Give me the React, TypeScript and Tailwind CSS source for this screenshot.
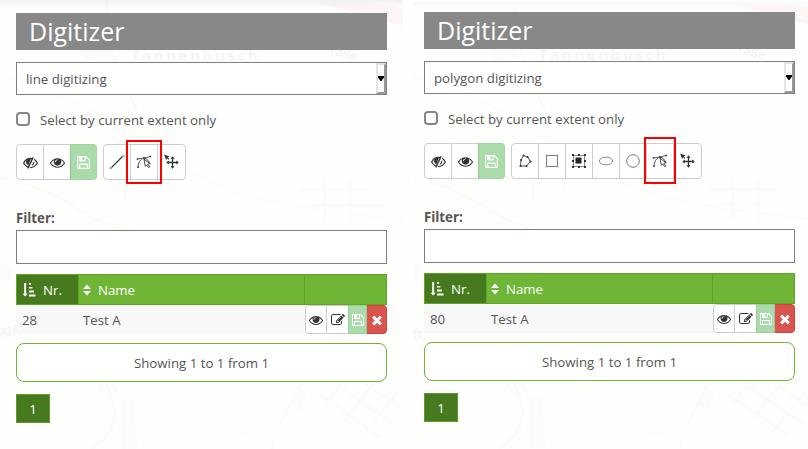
import React from 'react';

type IconProps = { size?: number };

const EYE =
  'M1664 960q-152-236-381-353 61 104 61 225 0 185-131.500 316.500t-316.500 131.500-316.500-131.500-131.500-316.500q0-121 61-225-229 117-381 353 133 205 333.500 326.500t434.500 121.500 434.500-121.500 333.500-326.500zm-720-384q0-20-14-34t-34-14q-125 0-214.500 89.500t-89.500 214.500q0 20 14 34t34 14 34-14 14-34q0-86 61-147t147-61q20 0 34-14t14-34zm848 384q0 34-20 69-140 230-376.500 368.500t-499.500 138.500-499.500-139-376.500-368q-20-35-20-69t20-69q140-229 376.500-368t499.500-139 499.500 139 376.500 368q20 35 20 69z';
const SAVE =
  'M512 1536h768v-384h-768v384zm896 0h128v-896q0-14-10-38.500t-20-34.500l-281-281q-10-10-34-20t-39-10v416q0 40-28 68t-68 28h-576q-40 0-68-28t-28-68v-416h-128v1280h128v-416q0-40 28-68t68-28h832q40 0 68 28t28 68v416zm-384-928v-320q0-13-9.500-22.500t-22.500-9.500h-192q-13 0-22.500 9.500t-9.500 22.500v320q0 13 9.500 22.500t22.500 9.500h192q13 0 22.500-9.500t9.500-22.500zm640 32v928q0 40-28 68t-68 28h-1344q-40 0-68-28t-28-68v-1344q0-40 28-68t68-28h928q40 0 88 20t76 48l280 280q28 28 48 76t20 88z';
const EDIT =
  'M888 1184l116-116-152-152-116 116v56h96v96h56zm440-720q-16-16-33 1l-350 350q-17 17-1 33t33-1l350-350q17-17 1-33zm80 594v190q0 119-84.500 203.500t-203.500 84.500h-832q-119 0-203.500-84.500t-84.500-203.500v-832q0-119 84.500-203.500t203.500-84.500h832q63 0 117 25 15 7 18 23 3 17-9 29l-49 49q-14 14-32 8-23-6-45-6h-832q-66 0-113 47t-47 113v832q0 66 47 113t113 47h832q66 0 113-47t47-113v-126q0-13 9-22l64-64q15-15 35-7t20 29zm-96-738l288 288-672 672h-288v-288zm444 132l-92 92-288-288 92-92q28-28 68-28t68 28l152 152q28 28 28 68t-28 68z';
const TIMES =
  'M1490 1322q0 40-28 68l-136 136q-28 28-68 28t-68-28l-294-294-294 294q-28 28-68 28t-68-28l-136-136q-28-28-28-68t28-68l294-294-294-294q-28-28-28-68t28-68l136-136q28-28 68-28t68 28l294 294 294-294q28-28 68-28t68 28l136 136q28 28 28 68t-28 68l-294 294 294 294q28 28 28 68z';

function Glyph({ d, size = 14 }: { d: string; size?: number }) {
  return (
    <svg width={size} height={size} viewBox="0 0 1792 1792" fill="currentColor" className="shrink-0">
      <path d={d} />
    </svg>
  );
}

const EyeIcon = ({ size }: IconProps) => <Glyph d={EYE} size={size} />;
const SaveIcon = ({ size }: IconProps) => <Glyph d={SAVE} size={size} />;

function EyeSlashIcon() {
  return (
    <svg width="15" height="15" viewBox="0 0 14 14" className="shrink-0">
      <path
        d="M7 3.1C4.300 3.100 2 4.700.6 7.500 2 10 4.300 11.700 7 11.700S12 10 13.400 7.500C12 4.700 9.700 3.100 7 3.100z"
        fill="none"
        stroke="currentColor"
        strokeWidth="1.1"
      />
      <path d="M7.500 3.300a3.300 3.300 0 0 0-2.500 6.200z" fill="currentColor" />
      <path d="M10.200 3 5.700 12" stroke="#fff" strokeWidth="1.600" />
      <path d="M9.400 2.200 4.500 12.500" stroke="currentColor" strokeWidth="1.300" />
      <path d="M10.300 6.300q0 2.200-2 3.400" fill="none" stroke="currentColor" strokeWidth="1" />
    </svg>
  );
}

function LineIcon() {
  return (
    <svg width="16" height="16" viewBox="0 0 16 16" fill="none" className="shrink-0">
      <path d="M2.500 13.500 13.500 2.500" stroke="#333" strokeWidth="1.100" />
      <rect x=".8" y="13" width="2" height="2" rx="1" fill="#fff" stroke="#888" strokeWidth=".8" />
      <rect x="13.200" y="1" width="2" height="2" rx="1" fill="#fff" stroke="#888" strokeWidth=".8" />
    </svg>
  );
}

function PolygonIcon() {
  return (
    <svg width="16" height="16" viewBox="0 0 16 16" fill="none" className="shrink-0">
      <path d="M6.500 2.500 10.500 4 13.500 8.500 9.500 13H3.500L4 7z" stroke="#555" strokeWidth="1" />
      <g fill="#333">
        <circle cx="6.500" cy="2.500" r="1" />
        <circle cx="10.500" cy="4" r="1.100" />
        <circle cx="13.500" cy="8.500" r="1.100" />
        <circle cx="9.500" cy="13" r="1" />
        <circle cx="3.500" cy="13" r="1.100" />
        <circle cx="4" cy="7" r="1" />
      </g>
    </svg>
  );
}

function RectangleIcon() {
  return (
    <svg width="16" height="16" viewBox="0 0 16 16" fill="none" className="shrink-0">
      <path d="M2.500 2.500h11v11h-11z" stroke="#777" />
      <path d="M1.500 1.500h2v2h-2zM12.500 1.500h2v2h-2zM1.500 12.500h2v2h-2zM12.500 12.500h2v2h-2z" fill="#aaa" />
    </svg>
  );
}

function DonutIcon() {
  return (
    <svg width="16" height="16" viewBox="0 0 16 16" fill="none" className="shrink-0">
      <path d="M2.500 2.500h11v11h-11z" stroke="#888" />
      <path
        d="M1 1h2v2H1zM7 1h2v2H7zM13 1h2v2h-2zM1 13h2v2H1zM7 13h2v2H7zM13 13h2v2h-2zM1 7h2v2H1zM13 7h2v2h-2z"
        fill="#333"
      />
      <path d="M4.500 4.500h6v6h-6z" fill="#222" />
    </svg>
  );
}

function EllipseIcon() {
  return (
    <svg width="16" height="16" viewBox="0 0 16 16" fill="none" className="shrink-0">
      <ellipse cx="8" cy="8" rx="6.600" ry="3.900" stroke="#666" strokeWidth=".8" />
    </svg>
  );
}

function CircleIcon() {
  return (
    <svg width="16" height="16" viewBox="0 0 16 16" fill="none" className="shrink-0">
      <circle cx="8" cy="8" r="6.300" stroke="#555" strokeWidth=".8" />
    </svg>
  );
}

function ModifyIcon() {
  return (
    <svg width="16" height="16" viewBox="0 0 16 16" fill="none" className="shrink-0">
      <path d="M2 13.500C2.200 9 4 5 8 4c3 .5 5 3 6.200 6.500" stroke="#444" strokeWidth="1" />
      <path d="M1.500 5 8 4 14.500 2.500" stroke="#555" strokeWidth=".9" />
      <path d="M.8 4.200h1.500v1.500H.8zM7.200 3.200h1.600v1.600H7.200zM13.500 1.700h1.500v1.500h-1.500zM1.200 12.400h1.500v1.500H1.200z" fill="#333" />
      <path d="m8 5 1.300 7.300 1.400-1.400 2 2.800 1.100-.9-1.900-2.600 1.700-.7z" fill="#fff" stroke="#333" strokeWidth=".9" />
    </svg>
  );
}

function MoveIcon() {
  return (
    <svg width="16" height="16" viewBox="0 0 16 16" className="shrink-0">
      <path d="M.2.500 5.600 2.500 3.900 3.500 5.400 5.100 4.700 5.800 3.200 4.300 2 6z" fill="#333" />
      <path d="M8.500 3.500v10M3.500 8.500h10.500" stroke="#333" strokeWidth="1.300" />
      <path d="M8.500 2.300 10.500 4.800h-4zM8.500 14.800 6.500 12.300h4zM2.300 8.500l2.500-2v4zM14.800 8.500l-2.500-2v4z" fill="#333" />
    </svg>
  );
}

function SortAscIcon() {
  return (
    <svg width="14" height="14" viewBox="0 0 14 14" fill="currentColor" className="shrink-0">
      <path d="M2.200 0h1.900v10.700h1.700L3.150 13.600.5 10.700h1.700zM7 0h2v1.800H7zM7 3.900h3.400v1.700H7zM7 7.600h4.900v1.800H7zM7 11.500h6.500v1.900H7z" />
    </svg>
  );
}

function SortIcon() {
  return (
    <svg width="8" height="12" viewBox="0 0 8 12" fill="currentColor" className="shrink-0">
      <path d="M4 .5 7.900 5H.1zM4 11.500.1 7h7.800z" />
    </svg>
  );
}

function MapBackdrop({ place, shift }: { place: string; shift: number }) {
  return (
    <svg className="absolute inset-0 h-full w-full" fill="none">
      <g transform={`translate(${-shift} ${shift ? -3 : 0})`}>
        <path d="M308 0q45 12 95 26V9Q382 5 358 0z" fill="#fcf5f4" />
        <path d="M0 76q70 18 130 58t100 56 173 30" stroke="#fcfcfa" strokeWidth="2" />
        <path d="M0 178q45 8 85 35t160 30" stroke="#fdfbf6" strokeWidth="3" />
        <path d="M107 0q-4 45 30 110M272 449q8-30 28-62t45-65M82 349q20 20 30 50t-20 50" stroke="#fafafa" strokeWidth="2.500" />
        <path d="M0 266h12v14H0zM297 387l10 7-6 16-10-3zM82 46l26-3 4 15-26 3zM122 400h12l3 49h-16z" fill="#f9fcf9" />
        <path d="M240 375h24l-2 38 28 10-4 25-48-14z" fill="#fdfefb" />
        <path
          d="M320 395l60 42M330 380l65 45M340 367l60 40M325 405l35-45M345 420l35-45M365 433l32-40M110 155h60M110 172h75M125 150v50M155 150v40M300 190h70M310 205h75M325 180v40M350 180v45M82 362l28 38M92 358l26 34M85 380l25-22"
          stroke="#fbfbfb"
          strokeWidth="2.500"
        />
        <text x="131" y="61" className="font-['Open_Sans',sans-serif] text-[15px] font-semibold" fill="#f4f4f4" letterSpacing="2.900">
          Tannenbusch
        </text>
        <text x="330" y="54" transform="rotate(14 330 54)" className="font-['Open_Sans',sans-serif] text-[12px] font-semibold" fill="#f4f4f3">
          raße
        </text>
      </g>
      <text x="0" y="337" transform="rotate(-6 0 337)" className="font-['Open_Sans',sans-serif] text-[13px] font-semibold" fill="#f5f3f3">
        {place}
      </text>
    </svg>
  );
}

function ToolGroup({ children }: { children: React.ReactNode }) {
  return (
    <div className="flex h-9 divide-x divide-[#ccc] overflow-hidden rounded-[4px] border border-[#ccc] bg-white text-[#333]">
      {children}
    </div>
  );
}

function Tool({ children }: { children: React.ReactNode }) {
  return <button className="flex w-[27px] items-center justify-center">{children}</button>;
}

type PanelProps = {
  kind: string;
  id: string;
  tools: React.ReactNode[];
  frame: string;
};

function Panel({ kind, id, tools, frame }: PanelProps) {
  return (
    <div className="relative z-10 w-[371px] text-[13.25px] text-[#555]">
      <h1 className="flex h-[37px] items-center bg-[#888] pl-[13px] text-[25px] leading-none text-white">Digitizer</h1>

      <div className="mt-3 flex h-[33px] items-center justify-between border border-[#808080] bg-white pl-[9px]">
        <span className="pt-0.5">{kind}</span>
        <span className="flex h-full w-[10px] items-center justify-center border-2 border-t-[#e3e3e3] border-r-[#999] border-b-[#999] border-l-[#e3e3e3]">
          <svg width="6" height="5" viewBox="0 0 6 5" className="shrink-0">
            <path d="M0 0h6v1.500L3.500 5h-1L0 1.500z" fill="#000" />
          </svg>
        </span>
      </div>

      <label className="mt-[15px] flex h-5 items-center">
        <span className="-mt-0.5 mr-[10px] h-[14px] w-[14px] rounded-[4px] border-2 border-[#85858a] bg-white" />
        <span className="pt-0.5">Select by current extent only</span>
      </label>

      <div className="relative mt-[14px] flex gap-1.5">
        <div className="flex h-9 w-[81px] text-[#333]">
          <button className="flex w-7 items-center justify-center rounded-l-[4px] border border-[#ccc] bg-white">
            <EyeSlashIcon />
          </button>
          <button className="flex w-[26px] items-center justify-center border-y border-[#ccc] bg-white">
            <EyeIcon size={15} />
          </button>
          <button className="flex w-[27px] items-center justify-center rounded-r-[4px] border border-[#a3d4a4] border-l-[#8dc98f] bg-[#abdbab] text-white">
            <SaveIcon size={15} />
          </button>
        </div>
        <ToolGroup>
          {tools.map((tool, i) => (
            <Tool key={i}>{tool}</Tool>
          ))}
        </ToolGroup>
        <span className={frame} />
      </div>

      <div className="mt-[28px] h-5 font-bold leading-5">Filter:</div>
      <div className="mt-[2px] h-[34px] border border-[#808080] bg-white" />

      <div className="mt-[10px] flex h-[31px] border border-[#5fa425] bg-[#6fb536] text-white">
        <div className="flex w-[62px] items-center gap-[7px] border-r border-[#5fa425] bg-[#477a1e] pl-[5px]">
          <SortAscIcon />
          <span className="pt-0.5">Nr.</span>
        </div>
        <div className="flex grow items-center gap-[7px] pl-[4px]">
          <SortIcon />
          <span className="pt-0.5">Name</span>
        </div>
        <div className="w-[82px] border-l border-[#5fa425]" />
      </div>
      <div className="flex h-[29px] items-center bg-[#f8f8f8]">
        <span className="w-[67px] pt-0.5 pl-[6px]">{id}</span>
        <span className="grow pt-0.5">Test A</span>
        <div className="flex h-[29px] w-[82px] overflow-hidden rounded-[4px] text-[#333]">
          <span className="flex w-[22px] items-center justify-center rounded-l-[4px] border border-[#ccc] bg-white">
            <EyeIcon />
          </span>
          <span className="flex w-[21px] items-center justify-center border-y border-[#ccc] bg-white">
            <Glyph d={EDIT} />
          </span>
          <span className="flex w-[19px] items-center justify-center border border-[#98cf9a] bg-[#abdbab] text-white">
            <SaveIcon />
          </span>
          <span className="flex w-5 items-center justify-center rounded-r-[4px] border border-l-0 border-[#d43f3a] bg-[#d9534f] text-white">
            <Glyph d={TIMES} />
          </span>
        </div>
      </div>

      <div className="mt-[9px] flex h-[39px] items-center justify-center rounded-[8px] border border-[#6fb536] bg-white pt-0.5">
        Showing 1 to 1 from 1
      </div>
      <div className="mt-3 flex h-[29px] w-[34px] items-center justify-center border border-[#5b9a27] bg-[#477a1e] pt-0.5 text-white">
        1
      </div>
    </div>
  );
}

export default function App() {
  return (
    <div className="flex h-[449px] w-[808px] gap-[10px] overflow-hidden bg-white font-['Open_Sans','Noto_Sans',sans-serif]">
      <section className="relative h-[449px] w-[403px] shrink-0 overflow-hidden bg-[#fefefd] pt-[13px] pl-4">
        <MapBackdrop place="Alft" shift={0} />
        <div className="absolute inset-x-0 top-0 h-2 bg-linear-to-b from-[#f1f1f1] to-transparent" />
        <Panel
          kind="line digitizing"
          id="28"
          tools={[<LineIcon />, <ModifyIcon />, <MoveIcon />]}
          frame="absolute -top-1 left-[110px] h-[44px] w-9 border-2 border-[#f00]"
        />
      </section>
      <section className="relative mt-0.5 h-[447px] w-[395px] shrink-0 overflow-hidden bg-[#fefefd] pt-[10px] pl-[11px]">
        <MapBackdrop place="ft" shift={5} />
        <div className="absolute inset-x-0 top-0 h-2 bg-linear-to-b from-[#f9f9f9] to-transparent" />
        <Panel
          kind="polygon digitizing"
          id="80"
          tools={[
            <PolygonIcon />,
            <RectangleIcon />,
            <DonutIcon />,
            <EllipseIcon />,
            <CircleIcon />,
            <ModifyIcon />,
            <MoveIcon />,
          ]}
          frame="absolute -top-1.5 left-[220px] h-[47px] w-8 border-2 border-[#f00]"
        />
      </section>
    </div>
  );
}
